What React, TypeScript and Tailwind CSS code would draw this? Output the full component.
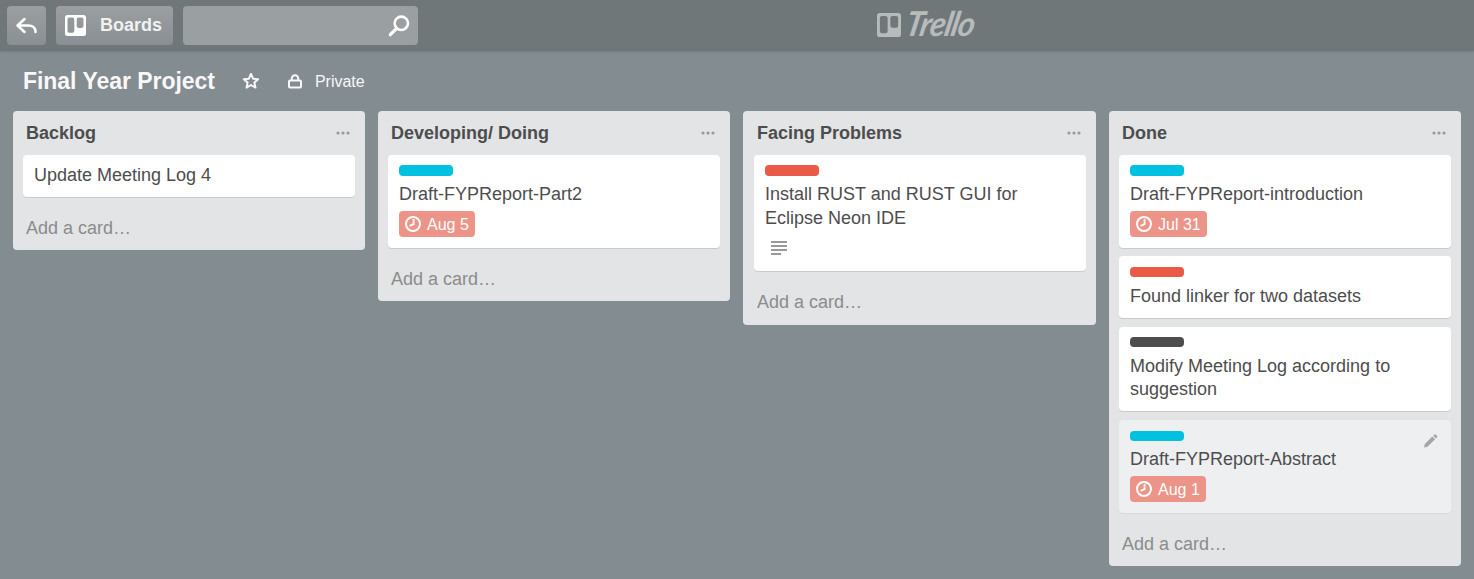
import React from "react";

type Label = "sky" | "red" | "black";

interface CardData {
  text: string;
  label?: Label;
  due?: string;
  description?: boolean;
  hovered?: boolean;
  box: string;
}

interface ListData {
  title: string;
  cards: CardData[];
  box: string;
}

const labelColors: Record<Label, string> = {
  sky: "bg-[#00c2e0]",
  red: "bg-[#eb5a46]",
  black: "bg-[#4d4d4d]",
};

const lists: ListData[] = [
  {
    title: "Backlog",
    box: "h-[139px] w-[352px] pl-[10px]",
    cards: [{ text: "Update Meeting Log 4", box: "h-[42px]" }],
  },
  {
    title: "Developing/ Doing",
    box: "h-[190px] w-[352px] pl-[10px]",
    cards: [{ text: "Draft-FYPReport-Part2", label: "sky", due: "Aug 5", box: "h-[92.8px]" }],
  },
  {
    title: "Facing Problems",
    box: "h-[214px] w-[353px] pb-px pl-[11px]",
    cards: [
      { text: "Install RUST and RUST GUI for Eclipse Neon IDE", label: "red", description: true, box: "h-[116.2px]" },
    ],
  },
  {
    title: "Done",
    box: "h-[455px] w-[352px] pl-[10px]",
    cards: [
      { text: "Draft-FYPReport-introduction", label: "sky", due: "Jul 31", box: "h-[92.8px] mb-[8.6px]" },
      { text: "Found linker for two datasets", label: "red", box: "h-[61.5px] mb-[8.65px]" },
      { text: "Modify Meeting Log according to suggestion", label: "black", box: "h-[84.85px] mb-[8.7px]" },
      { text: "Draft-FYPReport-Abstract", label: "sky", due: "Aug 1", hovered: true, box: "h-[92.8px]" },
    ],
  },
];

function BoardMark({ className }: { className: string }) {
  return (
    <svg viewBox="0 0 21 21" className={className} fill="currentColor" fillRule="evenodd">
      <path d="M2.500 0h16A2.500 2.500 0 0 1 21 2.500v16a2.500 2.500 0 0 1-2.500 2.500h-16A2.500 2.500 0 0 1 0 18.500v-16A2.500 2.500 0 0 1 2.500 0ZM4.300 2.600a1.800 1.800 0 0 0-1.800 1.800v11.500a1.800 1.800 0 0 0 1.800 1.800h3.200a1.800 1.800 0 0 0 1.800-1.800V4.400a1.800 1.800 0 0 0-1.800-1.800ZM13.500 2.600a1.800 1.800 0 0 0-1.800 1.800v6.700a1.800 1.800 0 0 0 1.800 1.800h3.200a1.800 1.800 0 0 0 1.800-1.800V4.400a1.800 1.800 0 0 0-1.800-1.800Z" />
    </svg>
  );
}

function ClockIcon() {
  return (
    <svg viewBox="0 0 16 16" className="h-4 w-4 shrink-0" fill="none" stroke="#fff">
      <circle cx="8" cy="8" r="7" strokeWidth="2" />
      <path d="M8.600 3v5.200L4.600 9.800" strokeWidth="1.800" />
    </svg>
  );
}

function Card({ card }: { card: CardData }) {
  return (
    <div
      className={`relative shrink-0 rounded-[4px] px-[11px] ${card.box} ${
        card.hovered ? "bg-[#edeff0] shadow-[0_1px_0_#d6dadc]" : "bg-white shadow-[0_1px_0_#c8cbcd]"
      } ${card.label ? "pt-[10.45px]" : "pt-[9px]"}`}
    >
      {card.label && <div className={`mb-[7.3px] h-[10.4px] w-[54px] rounded-[4px] ${labelColors[card.label]}`} />}
      <div className="w-[290px] text-[18px] leading-[23.4px] text-[#4d4d4d]">{card.text}</div>
      {card.due && (
        <div className="mt-[4.7px] flex h-[26px] w-fit items-center gap-[6px] rounded-[4px] bg-[#ec9488] px-[6px] text-[16px] text-white">
          <ClockIcon />
          <span className="pt-[2px] leading-[24px]">{card.due}</span>
        </div>
      )}
      {card.description && (
        <svg viewBox="0 0 16 14" className="mt-[10.7px] ml-[6px] h-[14px] w-4" fill="#999">
          <path d="M0 0h16v2H0zM0 4h16v2H0zM0 8h16v2H0zM0 12h10v2H0z" />
        </svg>
      )}
      {card.hovered && (
        <svg viewBox="0 0 14 14" className="absolute top-[14px] right-[13px] h-[14px] w-[14px]" fill="#a6a6a6">
          <path d="M0 13.500l.8-3.500L8.300 2.500l2.800 2.800L3.500 12.800zM9.200 1.700L10.500.4q.5-.5 1 0L13.200 2.100q.5.500 0 1l-1.300 1.300z" />
        </svg>
      )}
    </div>
  );
}

function List({ list }: { list: ListData }) {
  return (
    <section className={`flex shrink-0 flex-col rounded-[4px] bg-[#e2e4e6] pr-[10px] ${list.box}`}>
      <header className="flex h-[44px] shrink-0 items-center justify-between pr-[5px] pl-[3px]">
        <h2 className="text-[18px] leading-[24px] font-bold text-[#4d4d4d]">{list.title}</h2>
        <svg viewBox="0 0 14 4" className="h-1 w-[14px]" fill="#999">
          <circle cx="2" cy="2" r="1.600" />
          <circle cx="7" cy="2" r="1.600" />
          <circle cx="12" cy="2" r="1.600" />
        </svg>
      </header>
      {list.cards.map((card) => (
        <Card key={card.text} card={card} />
      ))}
      <a className="mt-auto mb-[10px] h-6 pl-[3px] text-[18px] leading-[24px] text-[#8c8c8c]">Add a card…</a>
    </section>
  );
}

export default function App() {
  return (
    <div className="flex h-[579px] w-[1474px] flex-col overflow-hidden bg-[#838c91] font-['Liberation_Sans',Arial,sans-serif]">
      <nav className="flex h-[51px] shrink-0 items-start bg-[#6f7779] pt-[6px] pl-[7px] shadow-[0_1px_2px_#747c80]">
        <button className="flex h-[39px] w-[39px] items-center justify-center rounded-[4px] bg-linear-to-b from-[#9b9fa2] to-[#898f92] text-white">
          <svg viewBox="0 0 22 18" className="h-[18px] w-[22px]" fill="none" stroke="currentColor" strokeWidth="2.500" strokeLinecap="round" strokeLinejoin="round">
            <path d="M8.500 2L1.500 8.500L8.500 15M2 8.500h10q7.500 0 7.500 6.500" />
          </svg>
        </button>
        <button className="ml-[10px] flex h-[39px] w-[117px] items-center rounded-[4px] bg-linear-to-b from-[#9b9fa2] to-[#898f92] pl-[9px]">
          <BoardMark className="h-[21px] w-[21px] text-white" />
          <span className="mb-[2px] ml-[14px] text-[18px] leading-[24px] font-bold text-[#f0f1f1]">Boards</span>
        </button>
        <div className="ml-[10px] flex h-[39px] w-[235px] items-center justify-end rounded-[4px] bg-[#9a9fa2] pr-[8px]">
          <svg viewBox="0 0 22 22" className="h-[22px] w-[22px]" fill="none" stroke="#fff">
            <circle cx="13.300" cy="8.300" r="6.700" strokeWidth="2.600" />
            <path d="M8.500 13.500L2.300 19.700" strokeWidth="3.200" strokeLinecap="round" />
          </svg>
        </div>
        <div className="ml-[459px] flex items-start text-[#b7bbbc]">
          <BoardMark className="mt-[7px] h-[24px] w-[24px]" />
          <span className="mt-px ml-[2px] origin-bottom-left -skew-x-12 scale-x-[1.04] scale-y-110 font-['Lato'] text-[31px] leading-[34px] font-bold tracking-[-1px] italic">
            Trello
          </span>
        </div>
      </nav>
      <header className="flex h-[60px] shrink-0 items-center pl-[23px] text-[#f8f8f8]">
        <h1 className="text-[23px] leading-[30px] font-bold tracking-[-0.040px]">Final Year Project</h1>
        <svg viewBox="0 0 18 18" className="ml-[27px] h-[18px] w-[18px]" fill="none" stroke="currentColor" strokeWidth="2" strokeLinejoin="round">
          <path d="M9 2l2.100 4.700 5.100.500-3.800 3.400 1.100 5L9 13l-4.500 2.600 1.100-5L1.800 7.200l5.100-.500z" />
        </svg>
        <svg viewBox="0 0 14 15" className="ml-[28px] h-[15px] w-[14px]" fill="none" stroke="currentColor" strokeWidth="2">
          <rect x="1" y="6.500" width="12" height="7" rx="1" />
          <path d="M3.800 6.500V4.500a3.200 3.200 0 0 1 6.400 0v2" />
        </svg>
        <span className="mt-[2px] ml-[13px] text-[16px] leading-[20px]">Private</span>
      </header>
      <main className="flex items-start gap-[13px] pl-[13px]">
        {lists.map((list) => (
          <List key={list.title} list={list} />
        ))}
      </main>
    </div>
  );
}
